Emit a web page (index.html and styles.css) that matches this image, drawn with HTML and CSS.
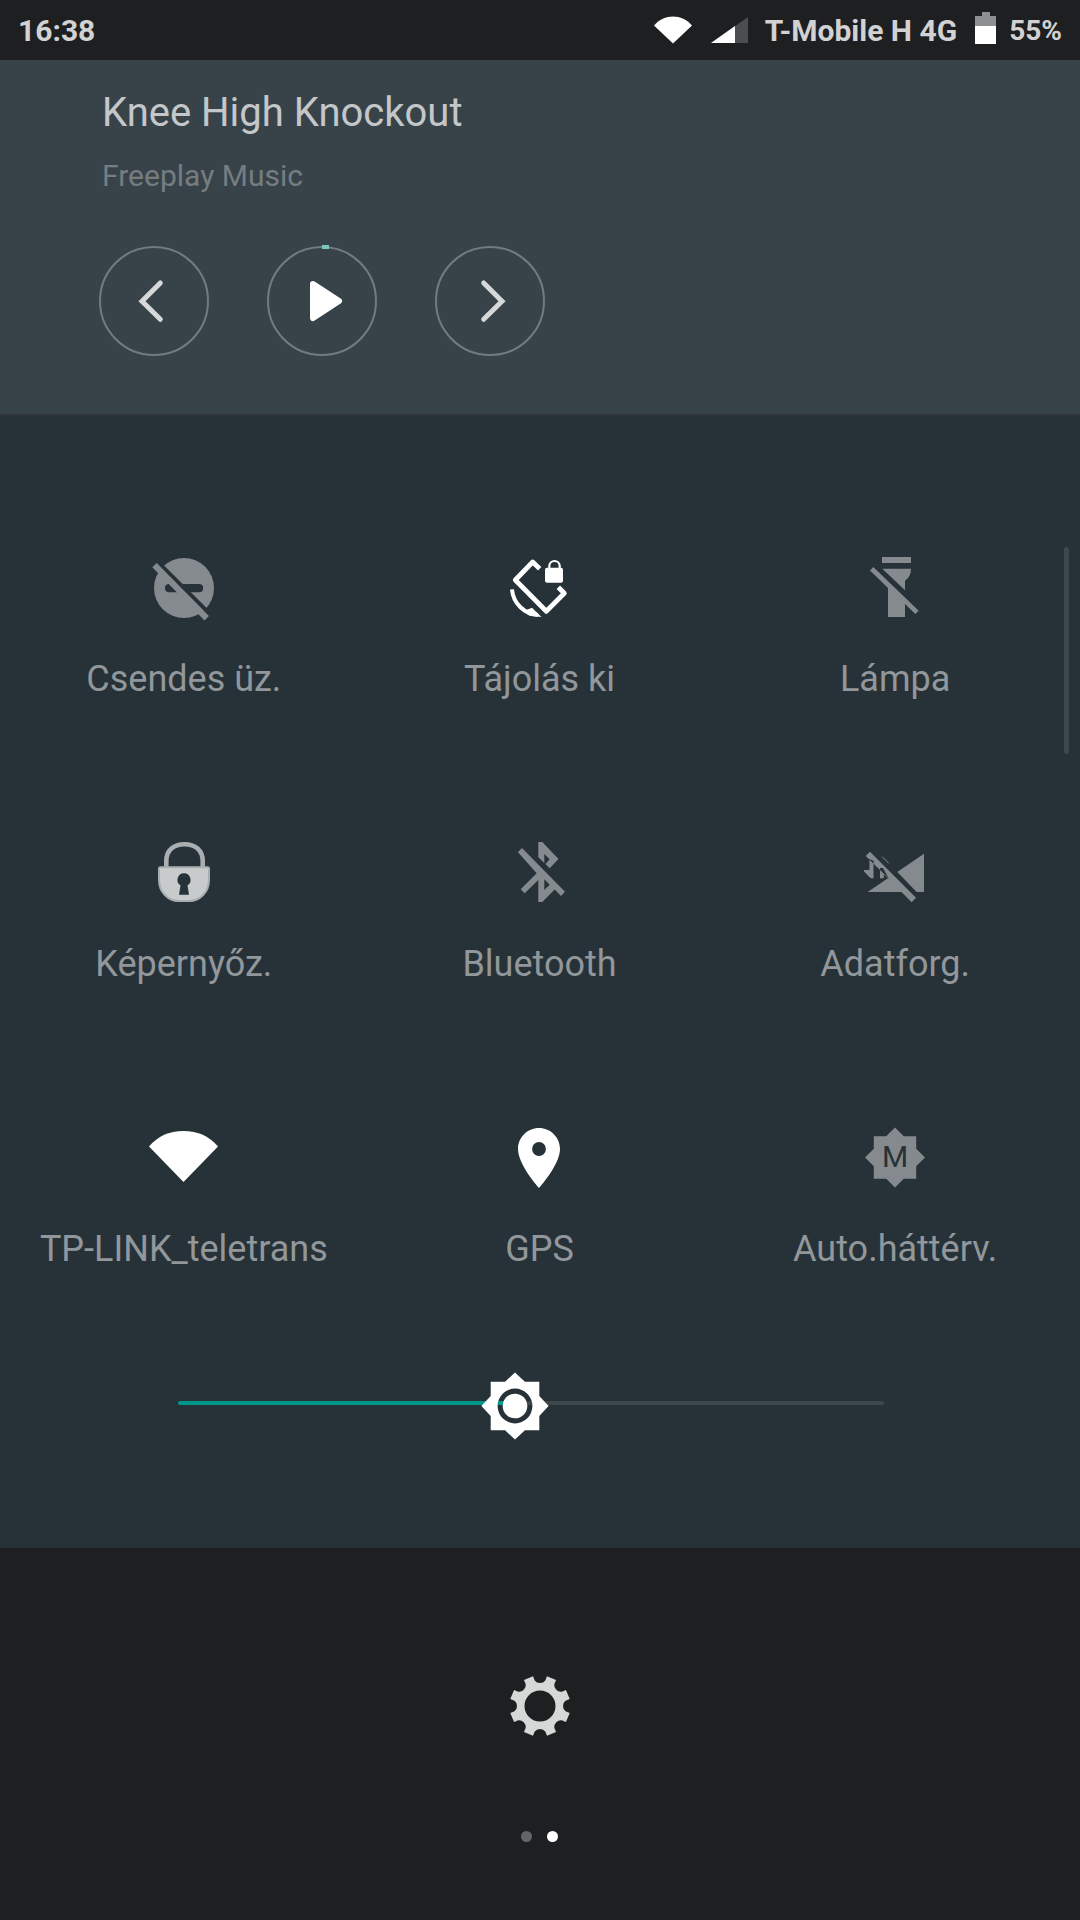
FILE: index.html
```html
<!DOCTYPE html>
<html lang="hu">
<head>
<meta charset="utf-8">
<meta name="viewport" content="width=device-width, initial-scale=1">
<title>Gyorsbeállítások</title>
<link rel="stylesheet" href="styles.css">
</head>
<body>
<header class="status">
  <time class="status-clock">16:38</time>
  <div class="status-icons">
    <svg class="status-wifi" width="38" height="28" viewBox="0 0 38 28" aria-hidden="true"><path fill="#fff" d="M19 27.500L0 9.500C5 3.500 12 0.500 19 0.500S33 3.500 38 9.500Z"/></svg>
    <svg class="status-signal" width="37" height="26" viewBox="0 0 37 26" aria-hidden="true"><path fill="#4c4d4f" d="M0 26L37 0V26Z"/><path fill="#fff" d="M0 26L24 9V26Z"/></svg>
    <span class="status-carrier">T-Mobile H 4G</span>
    <svg class="status-battery" width="21" height="32" viewBox="0 0 21 32" aria-hidden="true"><path fill="#8e8f90" d="M7 0H15V4H21V14H0V4H7Z"/><path fill="#fff" d="M0 14H21V32H0Z"/></svg>
    <span class="status-percent">55%</span>
  </div>
</header>

<section class="media">
  <h1 class="media-title">Knee High Knockout</h1>
  <p class="media-artist">Freeplay Music</p>
  <div class="media-controls">
    <button class="round" aria-label="Előző">
      <svg width="110" height="110" viewBox="0 0 110 110"><circle class="ring" cx="55" cy="55" r="54"/><path class="chevron" d="M61.300 37L43 55.300L61.300 73.300"/></svg>
    </button>
    <button class="round" aria-label="Lejátszás">
      <svg width="110" height="110" viewBox="0 0 110 110"><circle class="ring" cx="55" cy="55" r="54"/><path fill="#7ec4bf" d="M55 -1H62V3H55Z"/><path fill="#fff" stroke="#fff" stroke-width="6" stroke-linejoin="round" d="M46 38L72 55L46 72Z"/></svg>
    </button>
    <button class="round" aria-label="Következő">
      <svg width="110" height="110" viewBox="0 0 110 110"><circle class="ring" cx="55" cy="55" r="54"/><path class="chevron" d="M48.700 37L67 55.300L48.700 73.300"/></svg>
    </button>
  </div>
</section>

<main class="panel">
  <div class="tiles">
    <button class="tile">
      <svg class="icon" viewBox="0 0 24 24"><circle cx="12" cy="12" r="10"/><rect class="cut" x="5.670" y="10.670" width="12.700" height="2.750" rx="1.370"/><path class="cut" d="M3.800 2.900L21.200 20.300L20.300 21.300L2.900 3.900Z"/><path d="M1.440 5.050L2.900 3.650L20.300 21.300L18.850 22.800Z"/></svg>
      <span class="tile-label">Csendes üz.</span>
    </button>
    <button class="tile tile-on">
      <svg class="icon" viewBox="0 0 72 72"><path fill="none" stroke="#fff" stroke-width="4.800" stroke-linejoin="round" d="M36.700 16.700L29.700 10L12.300 28L43.300 59.300L61.300 41.300L55.300 35.300"/><path fill="none" stroke="#fff" stroke-width="4" d="M9 37.300A28 28 0 0 0 35 63"/><path d="M29 55.700L38.500 65L26 63.500L22 58.500Z"/><rect x="42" y="15.700" width="18" height="15" rx="2"/><path fill="none" stroke="#fff" stroke-width="2.200" d="M46.300 16V14A5.200 5 0 0 1 56.700 14V16"/></svg>
      <span class="tile-label">Tájolás ki</span>
    </button>
    <button class="tile">
      <svg class="icon" viewBox="0 0 72 72"><path d="M23 5H52V11H23ZM23.300 16.700H52C52 22 50 26 46 28.700V38.300ZM11 18.500L14.300 15L59.700 58.700L56.300 62L46 52V65H29V36Z"/></svg>
      <span class="tile-label">Lámpa</span>
    </button>
    <button class="tile">
      <svg class="icon" viewBox="0 0 72 72"><path fill="none" stroke="#a9aeb0" stroke-width="4.600" d="M18.300 30V24C18.300 13 26 7.300 36.500 7.300S54.700 13 54.700 24V30"/><path fill="#c7cbcc" stroke="#a9aeb0" stroke-width="2" d="M11 31.300Q11 30.300 12.500 30.300H59.500Q61 30.300 61 31.300V43C61 55 52 64 41 64H31C20 64 11 55 11 43Z"/><path class="cut" d="M36 36.300A6.500 6.500 0 0 1 39.500 48.300L41 57.700H31L32.500 48.300A6.500 6.500 0 0 1 36 36.300Z"/></svg>
      <span class="tile-label">Képernyőz.</span>
    </button>
    <button class="tile">
      <svg class="icon" viewBox="0 0 72 72"><path fill-rule="evenodd" d="M35.300 5H39.300L55.500 22L46.700 31.300L42.500 27L46.700 22.300L41.300 17V26L35.300 20.300ZM15 15L19 11L62 54.700L58 59L51.700 52.500L39.300 65H35.300V43L21.700 56.300L17.700 52.300L33.700 36.300L15 15.300ZM41.300 42.300V53L46.700 47.700Z"/></svg>
      <span class="tile-label">Bluetooth</span>
    </button>
    <button class="tile">
      <svg class="icon" viewBox="0 0 72 72"><path d="M65 16.700V55H57.700L38.300 35ZM8.700 55L29.300 41L22 34L6.700 19L11 14.700L57 60.700L52.700 65.300L42.500 55ZM10.500 22V33H5V34.500L11.700 41.300H14.700V24ZM21 31V41.300H24.700V37.500L30 42L24 31Z"/><path class="cut" d="M14.700 27.500L21 33.800V41.300H14.700Z"/><path fill="none" stroke="#858a8e" d="M23.300 19.700L29.700 26.300"/></svg>
      <span class="tile-label">Adatforg.</span>
    </button>
    <button class="tile tile-on">
      <svg class="icon" viewBox="0 0 72 72"><path d="M35.500 60L1 24.500C10 14 21 9 35.500 9S61 14 70 24.500Z"/></svg>
      <span class="tile-label">TP-LINK_teletrans</span>
    </button>
    <button class="tile tile-on">
      <svg class="icon" viewBox="0 0 24 24"><path fill-rule="evenodd" d="M12 2C8.130 2 5 5.130 5 9c0 5.250 7 13 7 13s7-7.750 7-13c0-3.870-3.130-7-7-7zm0 9.300a2.300 2.300 0 1 1 0-4.600 2.300 2.300 0 0 1 0 4.600z"/></svg>
      <span class="tile-label">GPS</span>
    </button>
    <button class="tile">
      <svg class="icon" viewBox="0 0 72 72"><path d="M57.200 44.300L66 35.500L57.200 26.700V14.300H44.800L36 5.500L27.200 14.300H14.800V26.700L6 35.500L14.800 44.300V56.700H27.200L36 65.500L44.800 56.700H57.200Z"/><text class="cut icon-letter" x="36" y="45" text-anchor="middle">M</text></svg>
      <span class="tile-label">Auto.háttérv.</span>
    </button>
  </div>
  <input class="brightness" type="range" min="0" max="1000" value="475" aria-label="Fényerő">
  <div class="scroll-thumb"></div>
</main>

<footer class="footer">
  <button class="settings" aria-label="Beállítások">
    <svg width="72" height="72" viewBox="-36 -36 72 72"><path fill="#d6d8d8" fill-rule="evenodd" d="M-7 -29.700L-5.300 -25.500Q-3.500 -23 0 -23Q3.500 -23 5.300 -25.500L7 -29.700L16.050 -25.950L14.280 -21.780Q13.790 -18.740 16.260 -16.260Q18.740 -13.790 21.780 -14.280L25.950 -16.050L29.700 -7L25.500 -5.300Q23 -3.500 23 0Q23 3.500 25.500 5.300L29.700 7L25.950 16.050L21.780 14.280Q18.740 13.790 16.260 16.260Q13.790 18.740 14.280 21.780L16.050 25.950L7 29.700L5.300 25.500Q3.500 23 0 23Q-3.500 23 -5.300 25.500L-7 29.700L-16.050 25.950L-14.280 21.780Q-13.790 18.740 -16.260 16.260Q-18.740 13.790 -21.780 14.280L-25.950 16.050L-29.700 7L-25.500 5.300Q-23 3.500 -23 0Q-23 -3.500 -25.500 -5.300L-29.700 -7L-25.950 -16.050L-21.780 -14.280Q-18.740 -13.790 -16.260 -16.260Q-13.790 -18.740 -14.280 -21.780L-16.050 -25.950ZM-15.500 0A15.500 15.500 0 1 0 15.500 0A15.500 15.500 0 1 0 -15.500 0Z"/></svg>
  </button>
  <div class="pages"><span class="dot"></span><span class="dot dot-on"></span></div>
</footer>
</body>
</html>
```
FILE: styles.css
```css
:root {
  --bar: #1e1f21;
  --panel: #273238;
  --media: #384349;
  --track: #3d484d;
  --muted: #858a8e;
}

* {
  box-sizing: border-box;
  margin: 0;
}

body {
  display: flex;
  flex-direction: column;
  min-height: 100vh;
  background: var(--bar);
  font-family: Roboto, "Noto Sans", sans-serif;
}

button {
  padding: 0;
  border: 0;
  background: none;
  font: inherit;
  color: inherit;
}

svg {
  display: block;
  overflow: visible;
}

.status {
  display: flex;
  justify-content: space-between;
  align-items: center;
  height: 60px;
  padding: 0 18px;
  color: #d2d2d2;
  font-size: 30px;
  font-weight: 700;
}

.status-icons {
  display: flex;
  align-items: center;
}

.status-signal {
  margin-left: 19px;
}

.status-carrier {
  margin-left: 17px;
}

.status-battery {
  margin: 0 13px 4px 18px;
}

.status-percent {
  font-size: 28px;
}

.media {
  padding: 29px 99px 58px;
  border-bottom: 2px solid #2e3439;
  background: var(--media);
}

.media-title {
  padding-left: 3px;
  font-size: 40px;
  font-weight: 400;
  line-height: 48px;
  color: #c4c7c9;
}

.media-artist {
  margin-top: 21px;
  padding-left: 3px;
  font-size: 30px;
  line-height: 36px;
  color: #757d81;
}

.media-controls {
  display: flex;
  gap: 58px;
  margin-top: 52px;
}

.ring {
  fill: none;
  stroke: #747b7f;
  stroke-width: 2px;
}

.chevron {
  fill: none;
  stroke: #d6d8d9;
  stroke-width: 5px;
  stroke-linecap: round;
}

.panel {
  position: relative;
  padding: 136px 7px 109px 6px;
  background: var(--panel);
}

.tiles {
  display: grid;
  grid-template-columns: repeat(3, 1fr);
  row-gap: 137px;
}

.tile {
  display: flex;
  flex-direction: column;
  align-items: center;
  gap: 34px;
  fill: var(--muted);
}

.tile-on {
  fill: #fff;
}

.icon {
  width: 72px;
  height: 72px;
}

.cut {
  fill: var(--panel);
}

.icon-letter {
  font-size: 30px;
  font-weight: 400;
}

.tile-label {
  font-size: 36px;
  line-height: 42px;
  color: #91979b;
  white-space: nowrap;
}

.brightness {
  display: block;
  width: calc(100% - 361px);
  height: 72px;
  margin: 97px 189px 0 172px;
  appearance: none;
  background: none;
}

.brightness::-webkit-slider-runnable-track {
  height: 4px;
  border-radius: 2px;
  background: linear-gradient(to right, #009688 48%, var(--track) 48%);
}

.brightness::-webkit-slider-thumb {
  width: 72px;
  height: 72px;
  margin-top: -31px;
  appearance: none;
  background: url("data:image/svg+xml,%3Csvg xmlns='http://www.w3.org/2000/svg' viewBox='0 0 24 24'%3E%3Cpath fill='white' fill-rule='evenodd' d='M20.100 15.310L23.200 12 20.100 8.690V3.900h-4.790L12 .800 8.690 3.900H3.900v4.790L.800 12 3.900 15.310V20.100h4.790L12 23.200 15.310 20.100H20.100zM6.200 12a5.800 5.800 0 1 1 11.600 0 5.800 5.800 0 0 1-11.600 0z'/%3E%3Ccircle fill='white' cx='12' cy='12' r='4.100'/%3E%3C/svg%3E") center / 100% no-repeat;
}

.scroll-thumb {
  position: absolute;
  top: 131px;
  right: 11px;
  width: 5px;
  height: 207px;
  border-radius: 3px;
  background: var(--track);
}

.footer {
  display: flex;
  flex-direction: column;
  align-items: center;
  padding: 122px 1px 78px 0;
}

.pages {
  display: flex;
  gap: 15px;
  margin-top: 89px;
}

.dot {
  width: 11px;
  height: 11px;
  border-radius: 50%;
  background: #646567;
}

.dot-on {
  background: #fff;
}
```
